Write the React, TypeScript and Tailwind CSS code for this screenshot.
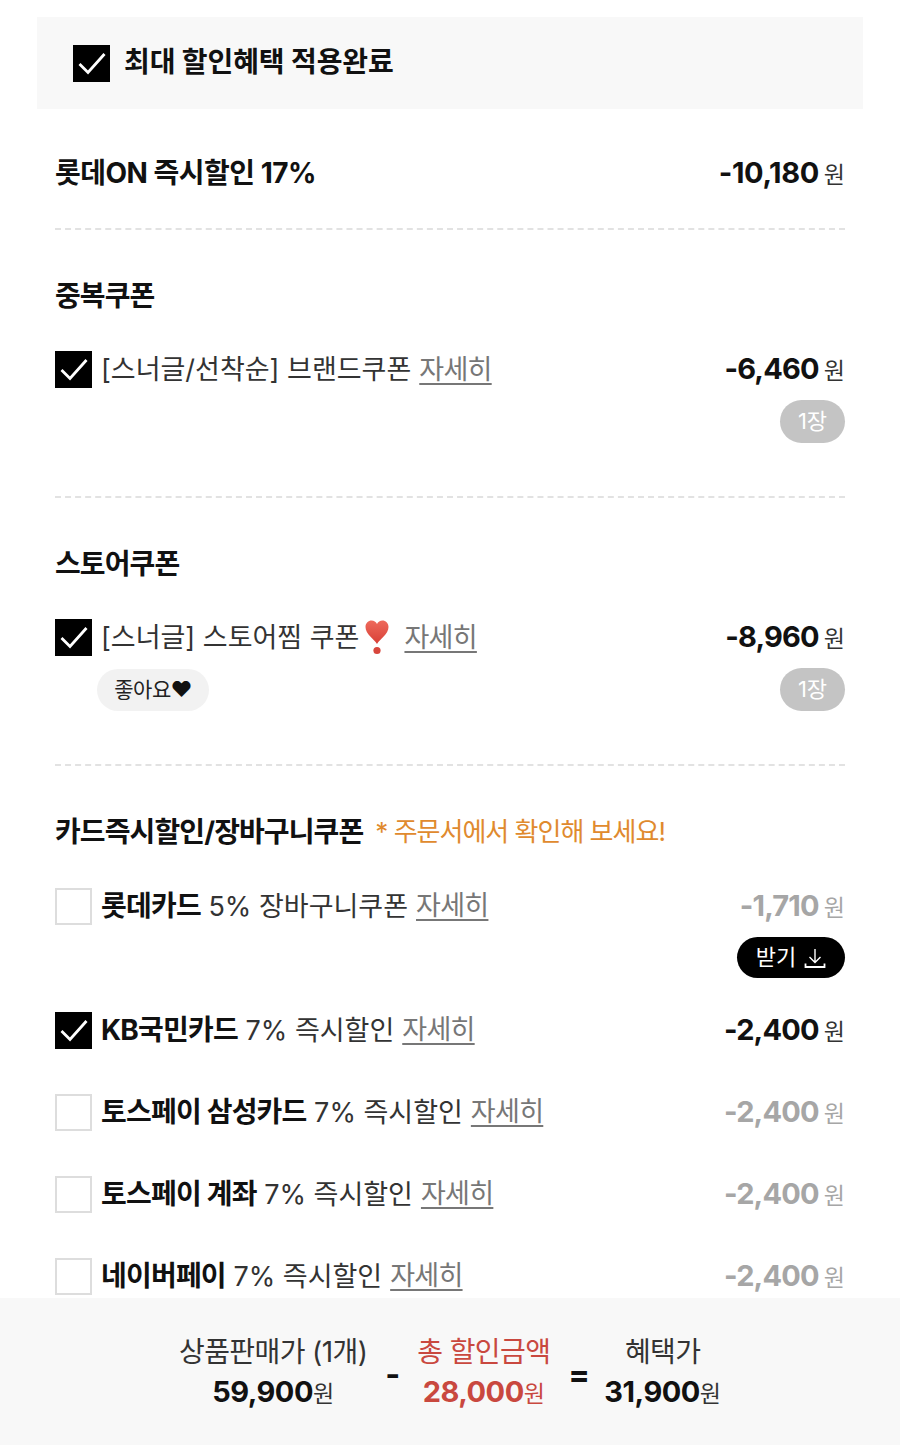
import React from "react";

const font = { fontFamily: '"Inter","Noto Sans CJK KR",sans-serif' };

function Check({ on }: { on: boolean }) {
  if (!on) return <div className="w-[37px] h-[37px] shrink-0 bg-white border-2 border-[#dddddd]" />;
  return (
    <div className="w-[37px] h-[37px] shrink-0 bg-black">
      <svg width="37" height="37" viewBox="0 0 37 37" fill="none">
        <path d="M6.5 19 L15 27.5 L31.5 9" stroke="white" strokeWidth="2.8" />
      </svg>
    </div>
  );
}

function Amount({ v, muted }: { v: string; muted?: boolean }) {
  return (
    <div className={`flex items-baseline shrink-0 ${muted ? "text-[#a6a6a6]" : "text-[#111111]"}`}>
      <span className={`text-[29px] font-bold ${v.length > 6 ? "tracking-[-0.4px]" : "tracking-[-0.8px]"}`}>{v}</span>
      <span className={`text-[23px] ml-[5px] ${muted ? "text-[#a6a6a6]" : "text-[#333333]"}`}>원</span>
    </div>
  );
}

function More() {
  return <span className="text-[#777777] tracking-[-0.7px] underline underline-offset-[4px] decoration-[1.5px]">자세히</span>;
}

function Row({ on, children, amount, textClass = "pt-[2px]" }: { on: boolean; children: React.ReactNode; amount: string; textClass?: string }) {
  return (
    <div className="flex items-center justify-between h-[38px]">
      <div className="flex items-center gap-[9px] text-[27px] tracking-[0px] text-[#333333] whitespace-nowrap">
        <Check on={on} />
        <div className={`flex items-center gap-[8px] ${textClass}`}>{children}</div>
      </div>
      <Amount v={amount} muted={!on} />
    </div>
  );
}

function Count() {
  return (
    <div className="w-[65px] h-[43px] rounded-full bg-[#c4c4c4] text-white text-[22px] flex items-center justify-center">1장</div>
  );
}

function Dash() {
  return <div className="border-t-2 border-dashed border-[#e2e2e2]" />;
}

function Heading({ children }: { children: React.ReactNode }) {
  return <div className="text-[28px] leading-[38px] font-bold tracking-[-0.9px] text-[#111111] whitespace-nowrap">{children}</div>;
}

function Card({ name, rest, on, amount }: { name: string; rest: string; on: boolean; amount: string }) {
  return (
    <Row on={on} amount={amount} textClass="pt-0">
      <span>
        <b className="font-bold text-[28px] text-[#111111] tracking-[-0.8px]">{name}</b> {rest}
      </span>
      <More />
    </Row>
  );
}

function Sum({ label, value, red }: { label: string; value: string; red?: boolean }) {
  return (
    <div className={`flex flex-col items-center ${red ? "text-[#c9483f]" : "text-[#111111]"}`}>
      <div className={`text-[28px] leading-[38px] tracking-[-0.6px] whitespace-nowrap ${red ? "" : "text-[#333333]"}`}>{label}</div>
      <div className="flex items-baseline mt-[2px]">
        <span className="text-[29px] leading-[38px] font-bold tracking-[-0.5px]">{value}</span>
        <span className={`text-[23px] ${red ? "" : "text-[#333333]"}`}>원</span>
      </div>
    </div>
  );
}

export default function App() {
  return (
    <div className="w-[900px] h-[1445px] bg-white flex flex-col overflow-hidden" style={font}>
      <div className="h-[1298px] overflow-hidden pt-[17px] shrink-0">
        <div className="mx-[37px] h-[92px] bg-[#f8f8f8] flex items-center pl-[36px] gap-[14px]">
          <Check on />
          <span className="text-[28px] font-bold tracking-[-0.1px] text-[#111111] pb-[2px]">최대 할인혜택 적용완료</span>
        </div>
        <div className="px-[55px]">
          <div className="h-[119px] flex items-center justify-between pt-[9px]">
            <div className="text-[28px] leading-[38px] font-bold tracking-[-0.5px] text-[#111111] whitespace-nowrap">롯데ON 즉시할인 17%</div>
            <Amount v="-10,180" />
          </div>
          <Dash />
          <div className="pt-[47px]">
            <Heading>중복쿠폰</Heading>
            <div className="mt-[35px]">
              <Row on amount="-6,460">
                <span>[스너글/선착순] 브랜드쿠폰</span>
                <More />
              </Row>
            </div>
            <div className="flex justify-end mt-[12px] mb-[53px]">
              <Count />
            </div>
          </div>
          <Dash />
          <div className="pt-[47px]">
            <Heading>스토어쿠폰</Heading>
            <div className="mt-[35px]">
              <Row on amount="-8,960">
                <span className="flex items-center">
                  [스너글] 스토어찜 쿠폰
                  <svg className="ml-[6px] mr-[7px]" width="24" height="36" viewBox="0 0 24 36">
                    <defs>
                      <linearGradient id="hg" x1="0" y1="0" x2="0" y2="1">
                        <stop offset="0" stopColor="#ee6a5c" />
                        <stop offset="1" stopColor="#d83f36" />
                      </linearGradient>
                    </defs>
                    <path d="M12 24 C9 19 0.5 14 0.5 7 C0.5 3 3.5 0.5 6.5 0.5 C9 0.5 11 2 12 4 C13 2 15 0.5 17.5 0.5 C20.5 0.5 23.5 3 23.5 7 C23.5 14 15 19 12 24 Z" fill="url(#hg)" />
                    <circle cx="12" cy="30.5" r="3.6" fill="#d8463c" />
                  </svg>
                </span>
                <More />
              </Row>
            </div>
            <div className="flex items-center justify-between mt-[12px] mb-[53px]">
              <div className="ml-[42px] w-[112px] h-[42px] rounded-full bg-[#f2f2f2] text-[21px] text-[#222222] flex items-center justify-center tracking-[-0.5px]">
                좋아요<span className="text-[#111111]">♥</span>
              </div>
              <Count />
            </div>
          </div>
          <Dash />
          <div className="pt-[46px]">
            <div className="flex items-center gap-[12px]">
              <Heading>카드즉시할인/장바구니쿠폰</Heading>
              <span className="text-[26px] text-[#e08a2e] tracking-[-1px] whitespace-nowrap">* 주문서에서 확인해 보세요!</span>
            </div>
            <div className="mt-[36px]">
              <Card on={false} name="롯데카드" rest="5% 장바구니쿠폰" amount="-1,710" />
            </div>
            <div className="flex justify-end mt-[12px] mb-[33px]">
              <div className="w-[108px] h-[41px] rounded-full bg-black text-white text-[22px] flex items-center justify-center gap-[8px]">
                받기
                <svg width="22" height="22" viewBox="0 0 22 22" fill="none" stroke="white" strokeWidth="1.4">
                  <path d="M11 2 V15 M5.5 10 L11 15.5 L16.5 10" />
                  <path d="M1.5 16.5 V20 H20.5 V16.5" strokeWidth="1.8" />
                </svg>
              </div>
            </div>
            <div className="flex flex-col gap-[44px]">
              <Card on name="KB국민카드" rest="7% 즉시할인" amount="-2,400" />
              <Card on={false} name="토스페이 삼성카드" rest="7% 즉시할인" amount="-2,400" />
              <Card on={false} name="토스페이 계좌" rest="7% 즉시할인" amount="-2,400" />
              <Card on={false} name="네이버페이" rest="7% 즉시할인" amount="-2,400" />
            </div>
          </div>
        </div>
      </div>
      <div className="flex-1 bg-[#f8f8f8] flex items-start justify-center pt-[35px] gap-[18px]">
        <Sum label="상품판매가 (1개)" value="59,900" />
        <div className="text-[32px] font-bold text-[#111111] mt-[23px] w-[14px] text-center leading-[38px]">-</div>
        <Sum label="총 할인금액" value="28,000" red />
        <div className="text-[32px] font-bold text-[#111111] mt-[23px] w-[18px] text-center leading-[38px]">=</div>
        <Sum label="혜택가" value="31,900" />
      </div>
    </div>
  );
}
